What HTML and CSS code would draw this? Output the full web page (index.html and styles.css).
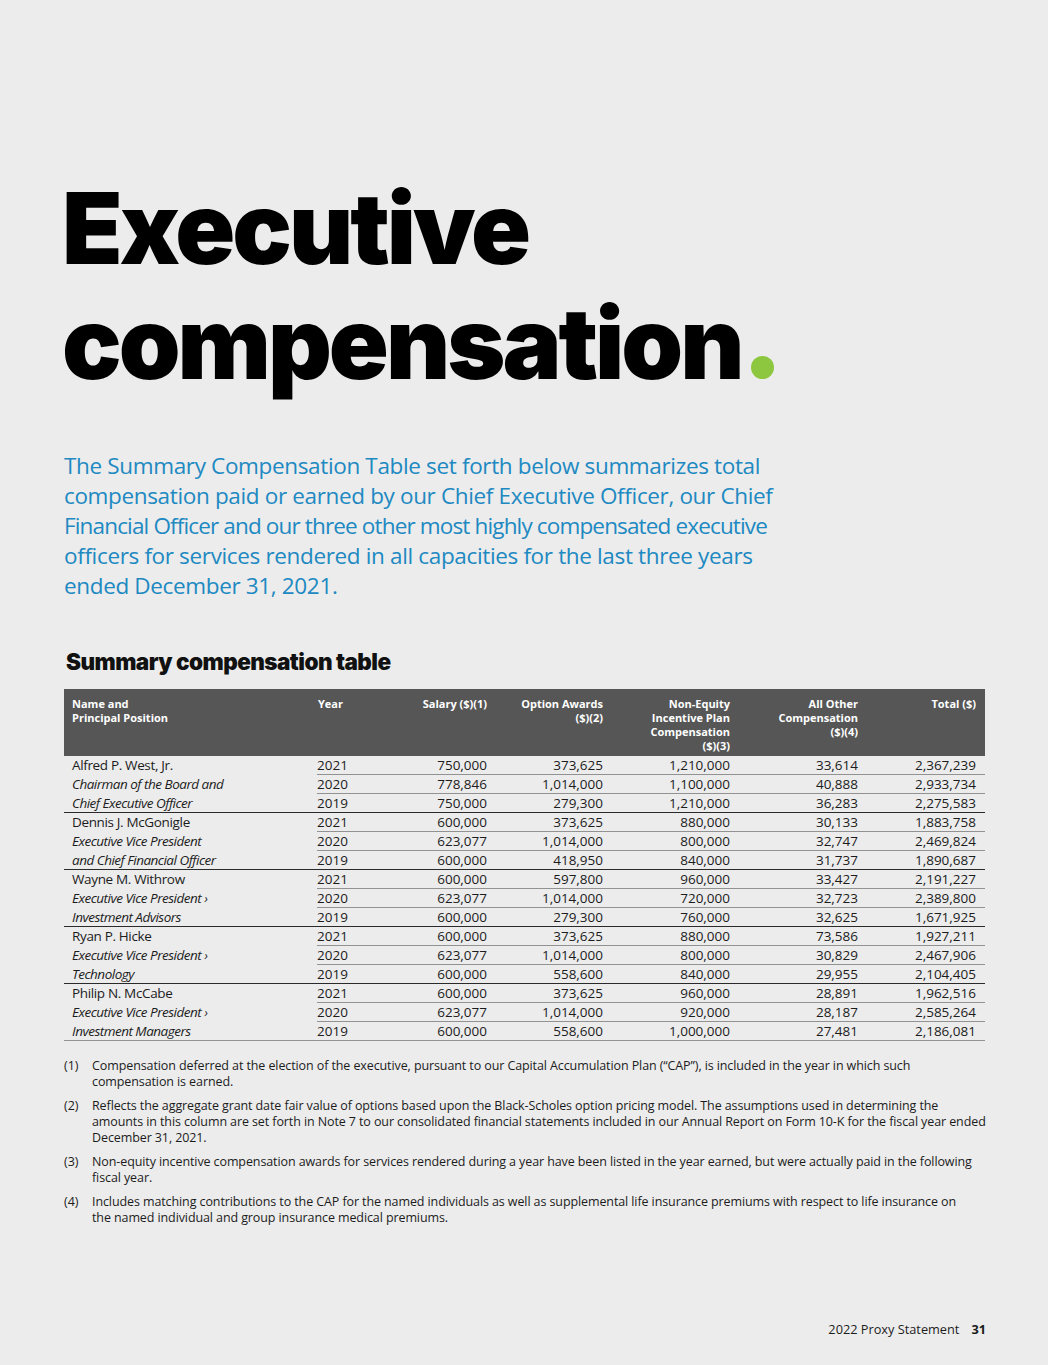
FILE: index.html
```html
<!DOCTYPE html>
<html lang="en">
<head>
<meta charset="utf-8">
<title>Executive compensation</title>
<link rel="stylesheet" href="styles.css">
</head>
<body>
<main class="page">
  <h1 class="title">Executive<br>compensation<span class="dot"></span></h1>

  <p class="intro">The Summary Compensation Table set forth below summarizes total<br>compensation paid or earned by our Chief Executive Officer, our Chief<br><span class="tight">Financial Officer and our three other most highly compensated executive</span><br>officers for services rendered in all capacities for the last three years<br>ended December 31, 2021.</p>

  <h2 class="subtitle">Summary compensation table</h2>

  <table class="sct">
    <colgroup>
      <col class="c-name"><col class="c-year"><col class="c-sal"><col class="c-opt"><col class="c-ne"><col class="c-oth"><col class="c-tot">
    </colgroup>
    <thead>
      <tr>
        <th class="l">Name and<br>Principal Position</th>
        <th class="l yr">Year</th>
        <th>Salary ($)(1)</th>
        <th>Option Awards<br>($)(2)</th>
        <th>Non-Equity<br>Incentive Plan<br>Compensation<br>($)(3)</th>
        <th>All Other<br>Compensation<br>($)(4)</th>
        <th>Total ($)</th>
      </tr>
    </thead>
    <tbody>
      <tr><td class="name">Alfred P. West, Jr.</td><td class="yr">2021</td><td>750,000</td><td>373,625</td><td>1,210,000</td><td>33,614</td><td>2,367,239</td></tr>
      <tr><td class="name pos">Chairman of the Board and</td><td class="yr">2020</td><td>778,846</td><td>1,014,000</td><td>1,100,000</td><td>40,888</td><td>2,933,734</td></tr>
      <tr class="end"><td class="name pos">Chief Executive Officer</td><td class="yr">2019</td><td>750,000</td><td>279,300</td><td>1,210,000</td><td>36,283</td><td>2,275,583</td></tr>

      <tr><td class="name">Dennis J. McGonigle</td><td class="yr">2021</td><td>600,000</td><td>373,625</td><td>880,000</td><td>30,133</td><td>1,883,758</td></tr>
      <tr><td class="name pos">Executive Vice President</td><td class="yr">2020</td><td>623,077</td><td>1,014,000</td><td>800,000</td><td>32,747</td><td>2,469,824</td></tr>
      <tr class="end"><td class="name pos">and Chief Financial Officer</td><td class="yr">2019</td><td>600,000</td><td>418,950</td><td>840,000</td><td>31,737</td><td>1,890,687</td></tr>

      <tr><td class="name">Wayne M. Withrow</td><td class="yr">2021</td><td>600,000</td><td>597,800</td><td>960,000</td><td>33,427</td><td>2,191,227</td></tr>
      <tr><td class="name pos">Executive Vice President &rsaquo;</td><td class="yr">2020</td><td>623,077</td><td>1,014,000</td><td>720,000</td><td>32,723</td><td>2,389,800</td></tr>
      <tr class="end"><td class="name pos">Investment Advisors</td><td class="yr">2019</td><td>600,000</td><td>279,300</td><td>760,000</td><td>32,625</td><td>1,671,925</td></tr>

      <tr><td class="name">Ryan P. Hicke</td><td class="yr">2021</td><td>600,000</td><td>373,625</td><td>880,000</td><td>73,586</td><td>1,927,211</td></tr>
      <tr><td class="name pos">Executive Vice President &rsaquo;</td><td class="yr">2020</td><td>623,077</td><td>1,014,000</td><td>800,000</td><td>30,829</td><td>2,467,906</td></tr>
      <tr class="end"><td class="name pos">Technology</td><td class="yr">2019</td><td>600,000</td><td>558,600</td><td>840,000</td><td>29,955</td><td>2,104,405</td></tr>

      <tr><td class="name">Philip N. McCabe</td><td class="yr">2021</td><td>600,000</td><td>373,625</td><td>960,000</td><td>28,891</td><td>1,962,516</td></tr>
      <tr><td class="name pos">Executive Vice President &rsaquo;</td><td class="yr">2020</td><td>623,077</td><td>1,014,000</td><td>920,000</td><td>28,187</td><td>2,585,264</td></tr>
      <tr class="last"><td class="name pos">Investment Managers</td><td class="yr">2019</td><td>600,000</td><td>558,600</td><td>1,000,000</td><td>27,481</td><td>2,186,081</td></tr>
    </tbody>
  </table>

  <ol class="notes">
    <li><span class="num">(1)</span><span class="txt">Compensation deferred at the election of the executive, pursuant to our Capital Accumulation Plan (“CAP”), is included in the year in which such<br>compensation is earned.</span></li>
    <li><span class="num">(2)</span><span class="txt">Reflects the aggregate grant date fair value of options based upon the Black-Scholes option pricing model. The assumptions used in determining the<br>amounts in this column are set forth in Note 7 to our consolidated financial statements included in our Annual Report on Form 10-K for the fiscal year ended<br>December 31, 2021.</span></li>
    <li><span class="num">(3)</span><span class="txt">Non-equity incentive compensation awards for services rendered during a year have been listed in the year earned, but were actually paid in the following<br>fiscal year.</span></li>
    <li><span class="num">(4)</span><span class="txt">Includes matching contributions to the CAP for the named individuals as well as supplemental life insurance premiums with respect to life insurance on<br>the named individual and group insurance medical premiums.</span></li>
  </ol>

  <footer class="foot"><span>2022 Proxy Statement</span><strong>31</strong></footer>
</main>
</body>
</html>
```

FILE: styles.css
```css
html, body {
  margin: 0;
  padding: 0;
  background: #ececec;
}
body {
  font-family: "Open Sans", "Liberation Sans", sans-serif;
  color: #1c1c1c;
}
.page {
  width: 1048px;
  height: 1365px;
  box-sizing: border-box;
  padding: 171px 62px 0 64px;
  display: flex;
  flex-direction: column;
}
.title {
  margin: 0 0 0 -2px;
  font-family: Inter, sans-serif;
  font-weight: 900;
  font-size: 99px;
  line-height: 115px;
  letter-spacing: -3px;
  color: #000;
}
.dot {
  display: inline-block;
  width: 23px;
  height: 23px;
  border-radius: 50%;
  background: #8dc63f;
  margin-left: 10px;
}
.intro {
  margin: 50px 0 0 0;
  font-family: "Open Sans", sans-serif;
  font-size: 22.5px;
  line-height: 30px;
  letter-spacing: -0.35px;
  color: #2089c2;
}
.intro .tight {
  letter-spacing: -0.85px;
}
.subtitle {
  margin: 46px 0 0 2px;
  font-family: Inter, sans-serif;
  font-weight: 900;
  font-size: 22.5px;
  line-height: 30px;
  letter-spacing: -0.55px;
  color: #111;
}
.sct {
  margin-top: 12px;
  width: 921px;
  border-collapse: collapse;
  table-layout: fixed;
  font-size: 13.5px;
}
.c-name { width: 253px; }
.c-year { width: 83px; }
.c-sal { width: 95px; }
.c-opt { width: 116px; }
.c-ne { width: 127px; }
.c-oth { width: 128px; }
.c-tot { width: 119px; }
.sct thead th {
  background: #565656;
  color: #fff;
  font-weight: 700;
  font-size: 11px;
  line-height: 14px;
  text-align: right;
  vertical-align: top;
  padding: 8px 8px 0 8px;
  height: 59px;
}
.sct thead th.l { text-align: left; }
.sct thead th.yr { padding-left: 1px; }
.sct thead th:last-child { padding-right: 9px; }
.sct tbody td {
  height: 18px;
  padding: 0 8px;
  line-height: 18px;
  text-align: right;
  white-space: nowrap;
  border-bottom: 1px solid #929292;
  color: #1c1c1c;
}
.sct tbody td:last-child { padding-right: 9px; }
.sct tbody td.yr { text-align: left; padding-left: 0; }
.sct tbody td.name {
  text-align: left;
  border-bottom: none;
  letter-spacing: -0.35px;
}
.sct tbody td.pos {
  font-style: italic;
  letter-spacing: -0.5px;
}
.sct tbody tr.end td,
.sct tbody tr.end td.name {
  border-bottom: 1px solid #2a2a2a;
}
.sct tbody tr.last td,
.sct tbody tr.last td.name {
  border-bottom: 1px solid #929292;
}
.notes {
  list-style: none;
  margin: 17px 0 0 0;
  padding: 0;
  display: flex;
  flex-direction: column;
  gap: 8px;
  font-size: 12.5px;
  line-height: 16px;
  color: #1c1c1c;
}
.notes li {
  display: flex;
}
.notes .num {
  width: 28px;
  flex: none;
}
.notes .txt {
  white-space: nowrap;
  letter-spacing: -0.1px;
}
.foot {
  margin-top: auto;
  margin-bottom: 27px;
  align-self: flex-end;
  display: flex;
  gap: 12px;
  font-size: 12.75px;
  line-height: 18px;
  color: #1c1c1c;
}
.foot strong { font-weight: 700; }
```
